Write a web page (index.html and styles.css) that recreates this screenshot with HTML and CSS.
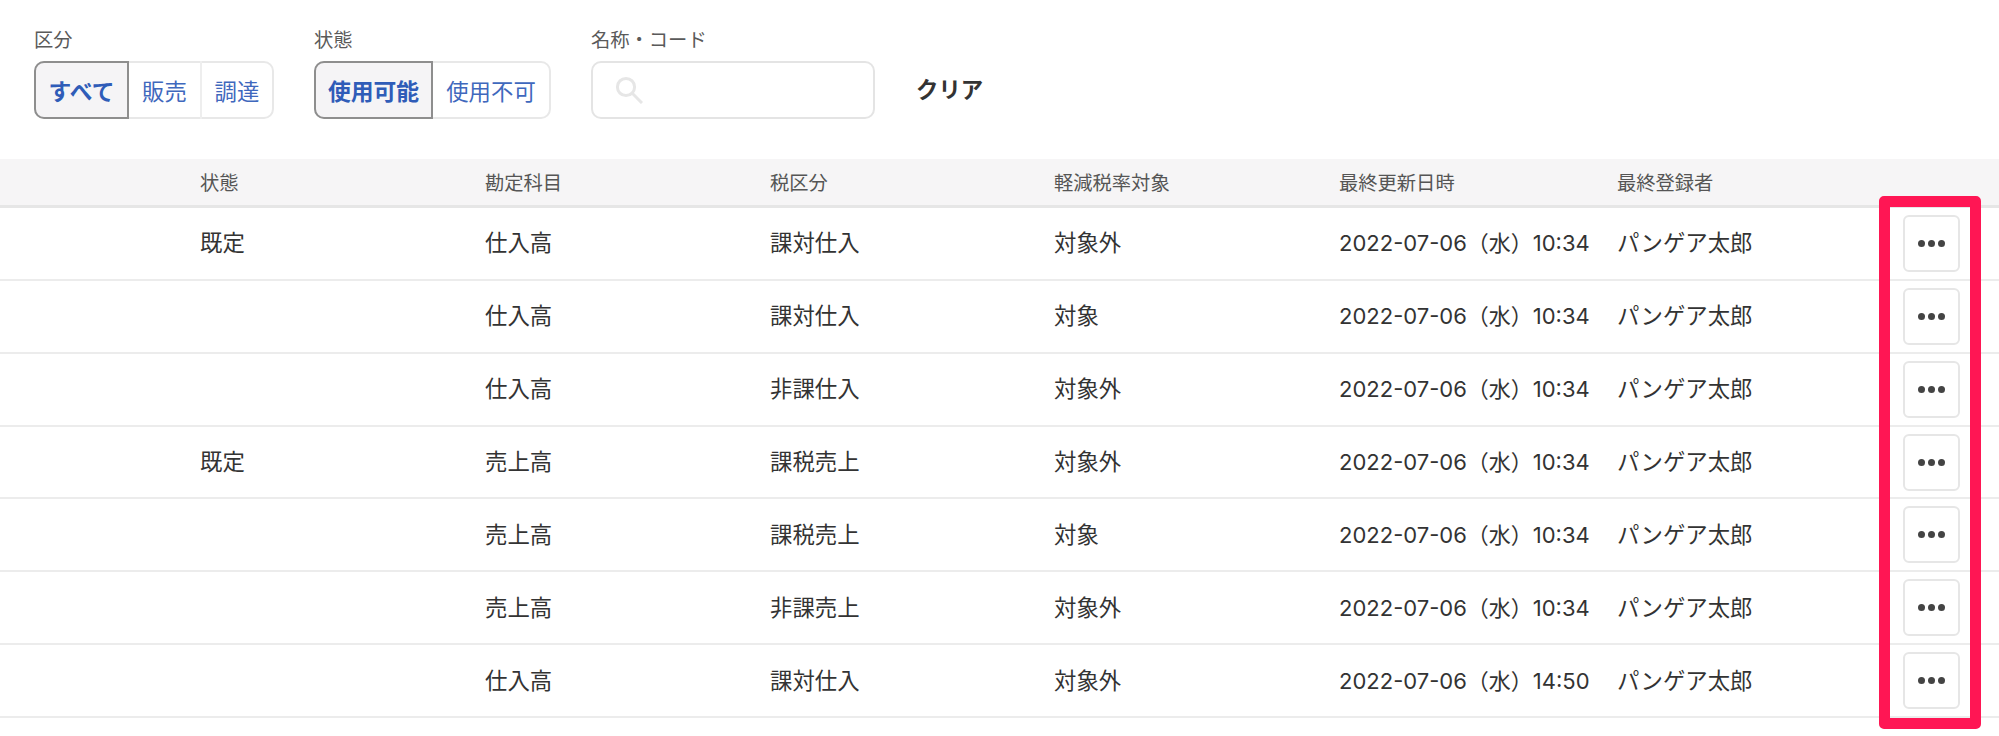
FILE: index.html
```html
<!DOCTYPE html>
<html lang="ja">
<head>
<meta charset="utf-8">
<title>税区分</title>
<link rel="stylesheet" href="styles.css">
</head>
<body>
<div class="page">
  <form class="filters">
    <div class="field">
      <div class="label">区分</div>
      <div class="seg">
        <span class="seg-btn active w-all">すべて</span>
        <span class="seg-btn w-two">販売</span>
        <span class="seg-btn w-last">調達</span>
      </div>
    </div>
    <div class="field">
      <div class="label">状態</div>
      <div class="seg">
        <span class="seg-btn active w-four">使用可能</span>
        <span class="seg-btn w-four-last">使用不可</span>
      </div>
    </div>
    <div class="field">
      <div class="label">名称・コード</div>
      <div class="search">
        <svg class="search-icon" viewBox="0 0 28 28" width="28" height="28" aria-hidden="true"><circle cx="11" cy="11" r="8.6" fill="none" stroke="#e6e6e6" stroke-width="3"/><path d="M17.5 17.5L27 27" fill="none" stroke="#e6e6e6" stroke-width="3"/></svg>
      </div>
    </div>
    <div class="clear">クリア</div>
  </form>

  <div class="table">
    <div class="row head">
      <div></div><div>状態</div><div>勘定科目</div><div>税区分</div><div>軽減税率対象</div><div>最終更新日時</div><div>最終登録者</div><div></div>
    </div>
    <div class="row"><div></div><div>既定</div><div>仕入高</div><div>課対仕入</div><div>対象外</div><div class="date">2022-07-06（水）10:34</div><div>パンゲア太郎</div><div class="act"><button class="more" type="button"><i></i><i></i><i></i></button></div></div>
    <div class="row"><div></div><div></div><div>仕入高</div><div>課対仕入</div><div>対象</div><div class="date">2022-07-06（水）10:34</div><div>パンゲア太郎</div><div class="act"><button class="more" type="button"><i></i><i></i><i></i></button></div></div>
    <div class="row"><div></div><div></div><div>仕入高</div><div>非課仕入</div><div>対象外</div><div class="date">2022-07-06（水）10:34</div><div>パンゲア太郎</div><div class="act"><button class="more" type="button"><i></i><i></i><i></i></button></div></div>
    <div class="row"><div></div><div>既定</div><div>売上高</div><div>課税売上</div><div>対象外</div><div class="date">2022-07-06（水）10:34</div><div>パンゲア太郎</div><div class="act"><button class="more" type="button"><i></i><i></i><i></i></button></div></div>
    <div class="row"><div></div><div></div><div>売上高</div><div>課税売上</div><div>対象</div><div class="date">2022-07-06（水）10:34</div><div>パンゲア太郎</div><div class="act"><button class="more" type="button"><i></i><i></i><i></i></button></div></div>
    <div class="row"><div></div><div></div><div>売上高</div><div>非課売上</div><div>対象外</div><div class="date">2022-07-06（水）10:34</div><div>パンゲア太郎</div><div class="act"><button class="more" type="button"><i></i><i></i><i></i></button></div></div>
    <div class="row"><div></div><div></div><div>仕入高</div><div>課対仕入</div><div>対象外</div><div class="date">2022-07-06（水）14:50</div><div>パンゲア太郎</div><div class="act"><button class="more" type="button"><i></i><i></i><i></i></button></div></div>
  </div>

  <div class="highlight"></div>
</div>
</body>
</html>
```

FILE: styles.css
```css
* { box-sizing: border-box; }
html, body { margin: 0; padding: 0; background: #fff; }
body {
  font-family: "Liberation Sans", "Noto Sans CJK JP", sans-serif;
  color: #333;
  font-size: 22.4px;
}
.page {
  position: relative;
  width: 1999px;
  height: 736px;
  overflow: hidden;
}

.filters {
  display: flex;
  align-items: flex-start;
  gap: 40px;
  height: 159px;
  padding: 28px 0 0 34px;
  margin: 0;
}
.field { display: flex; flex-direction: column; }
.label {
  height: 26px;
  line-height: 26px;
  margin-bottom: 7px;
  font-size: 19.3px;
  color: #5a5a5a;
}
.seg {
  display: flex;
  height: 58px;
  border: 2px solid #e8e8e8;
  border-radius: 10px;
}
.seg-btn {
  display: flex;
  align-items: center;
  justify-content: center;
  margin: -2px 0;
  color: #3f68bd;
}
.w-two { border-right: 2px solid #eeeeee; }
.seg-btn.active {
  margin-left: -2px;
  color: #2f5cb8;
  font-size: 22.8px;
  font-weight: 700;
  background: #f5f4f6;
  border: 2px solid #8e8e8e;
  border-radius: 10px 0 0 10px;
}
.w-all { width: 95px; }
.w-two { width: 73px; }
.w-last { width: 70px; }
.w-four { width: 119px; }
.w-four-last { width: 116px; }

.search {
  display: flex;
  align-items: center;
  width: 284px;
  height: 58px;
  padding: 0 0 0 22px;
  border: 2px solid #e4e4e4;
  border-radius: 10px;
}
.search-icon { display: block; }
.clear {
  margin: 34px 0 0 1px;
  line-height: 58px;
  font-weight: 700;
  color: #333;
}

.row {
  display: grid;
  grid-template-columns: 200px 285px 285px 284px 285px 278px 286px 96px;
  align-items: center;
  height: 72.86px;
  border-bottom: 2px solid #ececec;
  color: #333;
}
.row > div { padding-bottom: 4px; }
.row > .act { padding-bottom: 0; }
.date { font-family: "Inter", "Noto Sans CJK JP", sans-serif; font-size: 22px; }
.row.head {
  height: 49px;
  background: #f6f5f6;
  border-bottom: 3px solid #e6e6e6;
  font-size: 19.3px;
  color: #555;
}
.row.head > div { padding-bottom: 0; }
.act { display: flex; }
.more {
  display: flex;
  align-items: center;
  justify-content: center;
  gap: 3px;
  width: 57px;
  height: 57px;
  padding: 0;
  background: #fff;
  border: 2px solid #e6e6e6;
  border-radius: 6px;
}
.more i {
  display: block;
  width: 7px;
  height: 7px;
  border-radius: 50%;
  background: #444;
}

.highlight {
  position: absolute;
  left: 1879px;
  top: 196px;
  width: 102px;
  height: 533px;
  border: 11px solid #ff1654;
  border-radius: 5px;
}
```
